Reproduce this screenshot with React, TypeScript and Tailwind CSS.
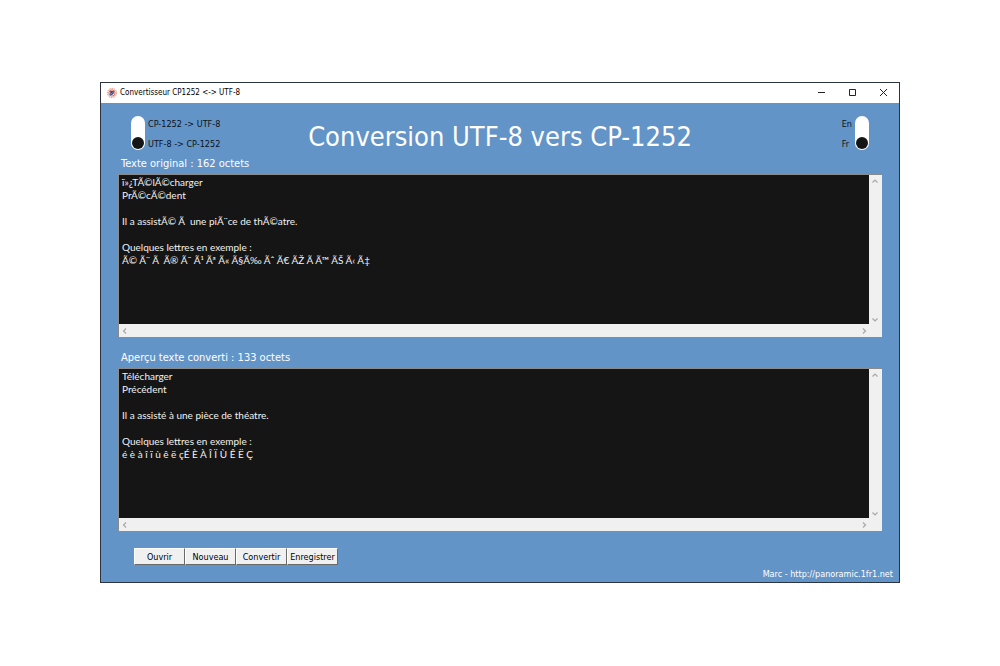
import React, { useState } from 'react';

const UI_FONT = "font-['DejaVu_Sans_Condensed','DejaVu_Sans',sans-serif]";
const TEXT_FONT = "font-['Lato','Noto_Sans',sans-serif]";

const ORIGINAL = `ï»¿TÃ©lÃ©charger
PrÃ©cÃ©dent

Il a assistÃ© Ã  une piÃ¨ce de thÃ©atre.

Quelques lettres en exemple :
Ã© Ã¨ Ã  Ã® Ã¯ Ã¹ Ãª Ã« Ã§Ã‰ Ãˆ Ã€ ÃŽ Ã Ã™ ÃŠ Ã‹ Ã‡`;

const CONVERTED = `Télécharger
Précédent

Il a assisté à une pièce de théatre.

Quelques lettres en exemple :
é è à î ï ù ê ë çÉ È À Î Ï Ù Ê Ë Ç`;

const ACTIONS = ['Ouvrir', 'Nouveau', 'Convertir', 'Enregistrer'];

function AppIcon() {
    return (
        <svg viewBox="0 0 12 12" className="h-3 w-3" aria-hidden="true">
            <circle cx="6" cy="6" r="4.6" fill="#fdeeea" stroke="#e0968a" strokeWidth="1" strokeDasharray="1.5 0.8" />
            <circle cx="6" cy="6" r="3.1" fill="#fff" stroke="#c8594d" strokeWidth="0.9" />
            <path d="M4.2 4.1h3.6v2.4L6 7.9H4.2z" fill="#3f4677" />
            <path d="m5 7 1.6-1.6" stroke="#e9dfe8" strokeWidth="0.5" />
        </svg>
    );
}

function TitleBar() {
    return (
        <div className="flex h-5 items-center justify-between bg-white pl-[5px] pr-2.5">
            <div className="flex items-center gap-0.5">
                <AppIcon />
                <span className="text-[8px] leading-3 text-black">Convertisseur CP1252 &lt;-&gt; UTF-8</span>
            </div>
            <div className="flex items-center gap-5 pb-0.5 text-[#222]">
                <button type="button" aria-label="Réduire">
                    <svg viewBox="0 0 11 11" className="h-[11px] w-[11px]" fill="none" stroke="currentColor">
                        <path d="M2 5.5h7" />
                    </svg>
                </button>
                <button type="button" aria-label="Agrandir">
                    <svg viewBox="0 0 11 11" className="h-[11px] w-[11px]" fill="none" stroke="currentColor">
                        <path d="M2.5 2.5h6v6h-6z" />
                    </svg>
                </button>
                <button type="button" aria-label="Fermer">
                    <svg viewBox="0 0 11 11" className="h-[11px] w-[11px]" fill="none" stroke="currentColor">
                        <path d="m2 2 7 7M9 2 2 9" />
                    </svg>
                </button>
            </div>
        </div>
    );
}

type ToggleProps = {
    name: string;
    legend: string;
    options: string[];
    value: string;
    onChange: (value: string) => void;
    labelsFirst?: boolean;
};

function VerticalToggle({ name, legend, options, value, onChange, labelsFirst }: ToggleProps) {
    return (
        <div
            role="radiogroup"
            aria-label={legend}
            className={`flex gap-[3px] ${labelsFirst ? 'flex-row-reverse justify-self-end' : ''}`}
        >
            <div className="flex h-[34px] w-3.5 flex-col items-center justify-between rounded-full bg-white py-px">
                {options.map((option) => (
                    <input
                        key={option}
                        id={`${name}-${option}`}
                        type="radio"
                        name={name}
                        checked={value === option}
                        onChange={() => onChange(option)}
                        className="h-3 w-3 cursor-pointer appearance-none rounded-full checked:bg-[#151515]"
                    />
                ))}
            </div>
            <div className="flex flex-col gap-2 pt-0.5">
                {options.map((option) => (
                    <label key={option} htmlFor={`${name}-${option}`} className="text-[9px] leading-3 text-[#0b1220]">
                        {option}
                    </label>
                ))}
            </div>
        </div>
    );
}

const ARROWS = {
    up: 'M1.5 4.5 4 2l2.5 2.5',
    down: 'M1.5 4.5 4 7l2.5-2.5',
    left: 'M5 1.5 2.5 4 5 6.5',
    right: 'M3 1.5 5.5 4 3 6.5',
};

function ArrowButton({ direction, label }: { direction: keyof typeof ARROWS; label: string }) {
    return (
        <button type="button" aria-label={label} className="flex h-3 w-3 items-center justify-center text-[#a8a8a8]">
            <svg viewBox="0 0 8 8" className="h-2 w-2" fill="none" stroke="currentColor" strokeWidth="1.2">
                <path d={ARROWS[direction]} />
            </svg>
        </button>
    );
}

type TextPanelProps = {
    id: string;
    label: string;
    value: string;
    onChange?: (value: string) => void;
};

function TextPanel({ id, label, value, onChange }: TextPanelProps) {
    return (
        <section>
            <label htmlFor={id} className="block pb-0.5 pl-[3px] text-[11px] leading-4 text-white">
                {label}
            </label>
            <div className="border-l border-t border-[#8a8a8a] bg-[#f0f0f0]">
                <div className="flex">
                    <textarea
                        id={id}
                        wrap="off"
                        spellCheck={false}
                        readOnly={!onChange}
                        value={value}
                        onChange={(e) => onChange?.(e.target.value)}
                        className={`h-[149px] min-w-0 flex-1 resize-none overflow-hidden bg-[#151515] px-[3px] py-px text-[10px] leading-[13px] text-[#f2f2f2] outline-none ${TEXT_FONT}`}
                    />
                    <div className="flex w-[13px] flex-col justify-between pt-px">
                        <ArrowButton direction="up" label="Défiler vers le haut" />
                        <ArrowButton direction="down" label="Défiler vers le bas" />
                    </div>
                </div>
                <div className="flex h-[13px] items-center justify-between pr-3">
                    <ArrowButton direction="left" label="Défiler vers la gauche" />
                    <ArrowButton direction="right" label="Défiler vers la droite" />
                </div>
            </div>
        </section>
    );
}

export default function App() {
    const [mode, setMode] = useState('UTF-8 -> CP-1252');
    const [lang, setLang] = useState('Fr');
    const [text, setText] = useState(ORIGINAL);

    return (
        <div className={`min-h-screen bg-white px-[10%] pt-[82px] ${UI_FONT}`}>
            <div className="border border-[#2b3440] bg-[#6394c8]">
                <TitleBar />

                <main className="px-[17px] pb-px pt-[13px]">
                    <header className="grid grid-cols-[1fr_auto_1fr] items-start px-[13px]">
                        <VerticalToggle
                            name="mode"
                            legend="Sens de conversion"
                            options={['CP-1252 -> UTF-8', 'UTF-8 -> CP-1252']}
                            value={mode}
                            onChange={setMode}
                        />
                        <h1 className="pt-[3px] text-[27px] leading-9 text-white">Conversion UTF-8 vers CP-1252</h1>
                        <VerticalToggle
                            name="lang"
                            legend="Langue"
                            options={['En', 'Fr']}
                            value={lang}
                            onChange={setLang}
                            labelsFirst
                        />
                    </header>

                    <div className="flex flex-col gap-[13px] pt-px">
                        <TextPanel id="original" label="Texte original : 162 octets" value={text} onChange={setText} />
                        <TextPanel id="converted" label="Aperçu texte converti : 133 octets" value={CONVERTED} />
                    </div>

                    <div className="flex pl-4 pt-[17px]">
                        {ACTIONS.map((action) => (
                            <button
                                key={action}
                                type="button"
                                className="h-[17px] w-[51px] whitespace-nowrap border border-b-[#696969] border-l-white border-r-[#696969] border-t-white bg-[#f0f0f0] text-[9px] leading-3 text-black"
                            >
                                {action}
                            </button>
                        ))}
                    </div>
                </main>

                <footer className="px-1.5 text-right text-[9px] leading-4 text-white">
                    Marc - <a href="http://panoramic.1fr1.net">http://panoramic.1fr1.net</a>
                </footer>
            </div>
        </div>
    );
}
